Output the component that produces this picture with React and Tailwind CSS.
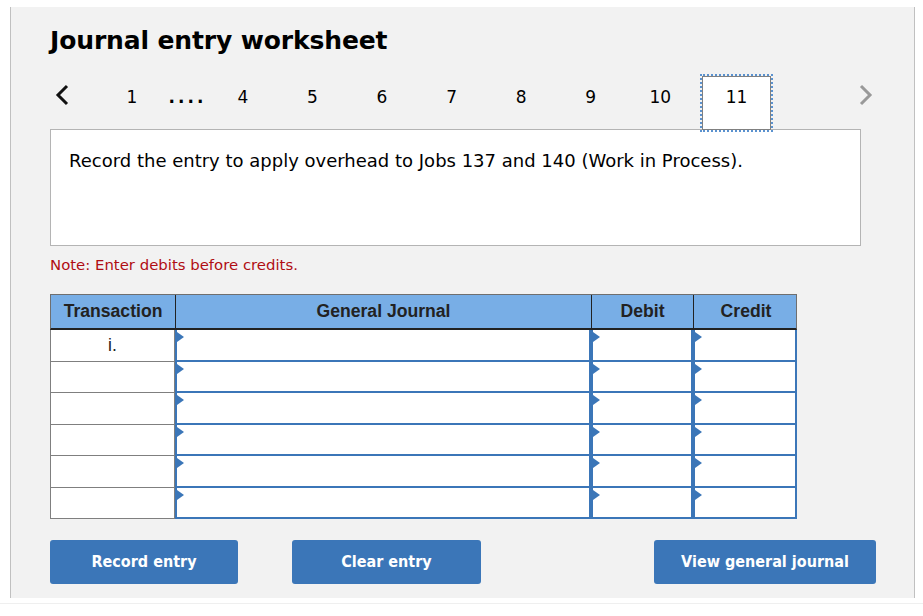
const pages = ['4', '5', '6', '7', '8', '9', '10'];
const filas = ['i.', '', '', '', '', ''];

const Celda = () => (
  <div className="relative bg-white border-2 border-[#3b76b8] border-t-0">
    <span className="absolute left-0 top-[2px] w-0 h-0 border-y-[5px] border-y-transparent border-l-[7px] border-l-[#3b76b8]"></span>
  </div>
);

const Boton = ({ ancho, children }) => (
  <button className={`${ancho} h-[44px] rounded-[3px] bg-[#3b76b8] text-white text-[16px] font-bold font-['DejaVu_Sans_Condensed','DejaVu_Sans',sans-serif]`}>
    {children}
  </button>
);

const App = () => {
  return (
    <div className="w-[923px] h-[616px] overflow-hidden bg-white pt-[7px] pl-[10px] font-['DejaVu_Sans',sans-serif] text-black">
      <div className="w-[905px] h-[591px] bg-[#f2f2f2] border-x border-[#c0c0c0] pl-[39px]">
        <h1 className="pt-[16px] h-[67px] text-[25px] leading-[36px] font-bold tracking-[-0.13px]">Journal entry worksheet</h1>

        <div className="flex items-center h-[57px] pb-[9px] relative z-10 text-[17px]">
          <div className="w-[47px] pl-[5px]">
            <svg className="-translate-y-[3px]" width="14" height="22" viewBox="0 0 14 22" fill="none" stroke="#111" strokeWidth="3"><path d="M12 2 L3 11 L12 20" /></svg>
          </div>
          <div className="w-[70px] text-center">1</div>
          <div className="w-[41px] text-center font-bold tracking-[3px]">....</div>
          {pages.map(p => (
            <div key={p} className="w-[69.6px] text-center">{p}</div>
          ))}
          <div className="ml-[6.8px] self-start mt-[2px] w-[69px] h-[54px] pb-[11px] flex items-center justify-center bg-white border border-[#808080] outline-2 outline-dotted outline-[#5b92cf]">11</div>
          <div className="ml-[88px]">
            <svg className="-translate-y-[3px]" width="14" height="22" viewBox="0 0 14 22" fill="none" stroke="#999" strokeWidth="3"><path d="M2 2 L11 11 L2 20" /></svg>
          </div>
        </div>

        <div className="w-[811px] h-[117px] -mt-[2px] bg-white border border-[#b4b4b4] pl-[18px] pt-[19px] text-[18px] leading-[24px]">
          Record the entry to apply overhead to Jobs 137 and 140 (Work in Process).
        </div>

        <p className="mt-[9px] h-[39px] text-[14.9px] leading-[20px] text-[#b00d12]">Note: Enter debits before credits.</p>

        <div className="w-[747px] font-['Liberation_Sans',sans-serif] text-[#222]">
          <div className="grid grid-cols-[125px_416px_102px_104px] h-[36px] bg-[#78aee6] border border-[#6f6f6f] border-b-2 border-b-[#222] text-[17.6px] font-bold leading-[32px] text-center">
            <div className="border-r border-[#222]">Transaction</div>
            <div className="border-r border-[#222]">General Journal</div>
            <div className="border-r border-[#222]">Debit</div>
            <div>Credit</div>
          </div>
          <div className="grid grid-cols-[125px_416px_102px_104px] auto-rows-[31.5px]">
            {filas.map((t, i) => (
              <div key={i} className="contents">
                <div className="bg-white border border-t-0 border-[#7f7f7f] text-center text-[17.6px] leading-[30px]">{t}</div>
                <Celda />
                <Celda />
                <Celda />
              </div>
            ))}
          </div>
        </div>

        <div className="flex mt-[21px]">
          <Boton ancho="w-[188px]">Record entry</Boton>
          <div className="ml-[54px]"><Boton ancho="w-[189px]">Clear entry</Boton></div>
          <div className="ml-[173px]"><Boton ancho="w-[222px]">View general journal</Boton></div>
        </div>
      </div>
      <div className="-ml-[10px] mt-[5px] h-[13px] border-t border-[#efefef]"></div>
    </div>
  );
};

export default App;
